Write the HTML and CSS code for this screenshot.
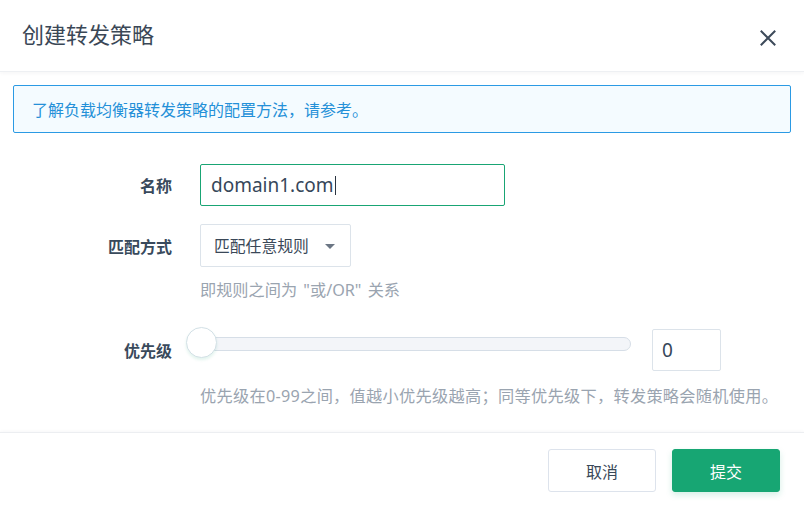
FILE: index.html
```html
<!DOCTYPE html>
<html lang="zh-CN">
<head>
<meta charset="utf-8">
<title>创建转发策略</title>
<link rel="stylesheet" href="styles.css">
</head>
<body>
<div class="dialog">
  <div class="header">
    <div class="title">创建转发策略</div>
    <button class="close" aria-label="关闭">
      <svg width="16" height="16" viewBox="0 0 16 16"><path d="M1.5 1.5 L14.5 14.5 M14.5 1.5 L1.5 14.5" stroke="#3d4a5a" stroke-width="2" fill="none" stroke-linecap="square"/></svg>
    </button>
  </div>
  <div class="content">
    <div class="alert">了解负载均衡器转发策略的配置方法，请参考。</div>
    <div class="form">
      <div class="row">
        <div class="label">名称</div>
        <div class="input focused"><span class="value">domain1.com</span><span class="caret"></span></div>
      </div>
      <div class="row row-select">
        <div class="label">匹配方式</div>
        <div class="select"><span>匹配任意规则</span><span class="arrow"></span></div>
      </div>
      <div class="hint hint-first">即规则之间为 "或/OR" 关系</div>
      <div class="row row-slider">
        <div class="label">优先级</div>
        <div class="slider"><div class="track"></div><div class="handle"></div></div>
        <div class="number">0</div>
      </div>
      <div class="hint hint-second">优先级在0-99之间，值越小优先级越高；同等优先级下，转发策略会随机使用。</div>
    </div>
  </div>
  <div class="footer">
    <button class="btn btn-cancel">取消</button>
    <button class="btn btn-submit">提交</button>
  </div>
</div>
</body>
</html>
```
FILE: styles.css
```css
* { box-sizing: border-box; }
html, body { margin: 0; padding: 0; }
body {
  width: 804px;
  height: 507px;
  overflow: hidden;
  background: #fff;
  font-family: "Noto Sans", "Noto Sans CJK SC", sans-serif;
  color: #3a4858;
}
.dialog { width: 804px; height: 507px; display: flex; flex-direction: column; }
.header {
  height: 72px;
  flex: none;
  display: flex;
  align-items: center;
  justify-content: space-between;
  padding: 0 28px 0 22px;
  border-bottom: 1px solid #eef0f3;
  box-shadow: 0 1px 4px rgba(30, 40, 60, 0.05);
}
.title { font-size: 22px; line-height: 30px; color: #3a4756; margin-top: -4px; }
.close {
  border: 0; background: none; padding: 0; margin: 4px 0 0 0;
  width: 16px; height: 16px; display: flex; cursor: pointer;
}
.content { padding: 13px 13px 0 13px; flex: none; }
.alert {
  height: 48px;
  border: 1px solid #2b9ae4;
  border-radius: 2px;
  background: #f4fbff;
  color: #2490d8;
  font-size: 16px;
  display: flex;
  align-items: center;
  padding: 0 18px;
}
.form { margin-top: 31px; }
.row { display: flex; align-items: center; }
.label {
  width: 159px;
  margin-right: 28px;
  text-align: right;
  font-size: 16px;
  font-weight: 700;
  color: #394a5c;
}
.input {
  width: 305px;
  height: 42px;
  border: 1px solid #dce3ea;
  border-radius: 2px;
  display: flex;
  align-items: center;
  padding: 0 10px;
  font-size: 19px;
  color: #36475a;
}
.input.focused { border-color: #19a574; }
.caret { width: 1px; height: 19px; background: #2a3440; margin-left: 1px; }
.row-select { margin-top: 18px; }
.select {
  width: 151px;
  height: 43px;
  border: 1px solid #dce3ea;
  border-radius: 2px;
  display: flex;
  align-items: center;
  justify-content: space-between;
  padding: 0 15px 0 13px;
  font-size: 15.8px;
  color: #3a4858;
}
.arrow {
  width: 0; height: 0;
  border-left: 5px solid transparent;
  border-right: 5px solid transparent;
  border-top: 5px solid #6b7684;
  margin-top: 2px;
}
.hint {
  margin-left: 187px;
  font-size: 16.2px;
  line-height: 24px;
  color: #9aa4b0;
}
.hint-first { margin-top: 11px; word-spacing: 2px; }
.row-slider { margin-top: 27px; }
.slider { position: relative; width: 431px; height: 42px; display: flex; align-items: center; }
.track {
  width: 100%;
  height: 14px;
  margin-top: -13px;
  background: #f3f5f9;
  border: 1px solid #d6dee7;
  border-radius: 7px;
}
.handle {
  position: absolute;
  left: -14px;
  top: -2px;
  width: 31px;
  height: 31px;
  border-radius: 50%;
  background: #fff;
  border: 1px solid #d3e0e6;
  box-shadow: 0 2px 3px rgba(25, 165, 116, 0.12);
}
.number {
  margin-left: 21px;
  width: 69px;
  height: 42px;
  border: 1px solid #dce3ea;
  border-radius: 2px;
  display: flex;
  align-items: center;
  padding: 0 9px;
  font-size: 19px;
  color: #36475a;
}
.hint-second { margin-top: 13px; letter-spacing: 0.3px; }
.footer {
  margin-top: 24px;
  border-top: 1px solid #eceef1;
  box-shadow: 0 -1px 3px rgba(30, 40, 60, 0.03);
  display: flex;
  justify-content: flex-end;
  gap: 16px;
  padding: 16px 24px 0 0;
  flex: 1;
}
.btn {
  width: 108px;
  height: 43px;
  border-radius: 3px;
  font-family: "Noto Sans", "Noto Sans CJK SC", sans-serif;
  font-size: 16px;
  cursor: pointer;
}
.btn-cancel { background: #fff; border: 1px solid #dde3ec; color: #3a4858; }
.btn-submit {
  background: #17a673;
  border: 1px solid #17a673;
  color: #fff;
  box-shadow: 0 3px 6px rgba(23, 166, 115, 0.18);
}
```
